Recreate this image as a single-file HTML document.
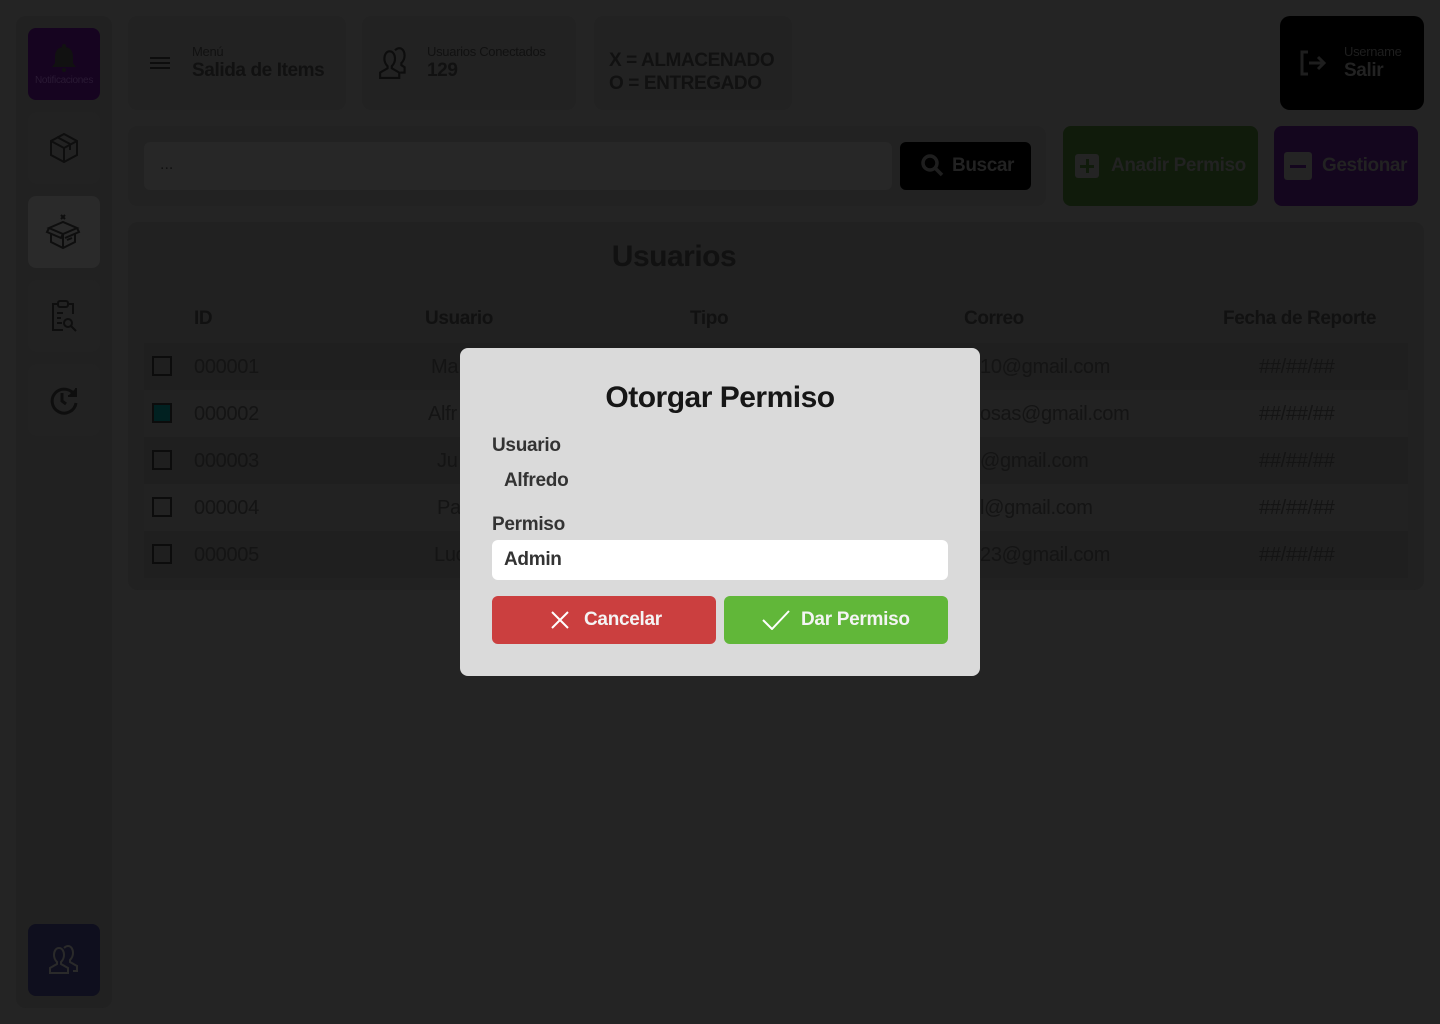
<!DOCTYPE html>
<html><head><meta charset="utf-8"><style>
*{box-sizing:border-box;margin:0;padding:0}
body{width:1440px;height:1024px;background:#242424;font-family:"Liberation Sans",sans-serif;position:relative;overflow:hidden;color:#111}
.a{position:absolute}
.side{left:16px;top:16px;width:96px;height:992px;background:#212121;border-radius:10px}
.sb{left:28px;width:72px;height:72px;border-radius:8px;background:#222;display:flex;align-items:center;justify-content:center}
.card{background:#222;border-radius:10px}
.lbl{font-size:13px;color:#111;font-weight:300;letter-spacing:-0.3px}
.big{font-size:19px;font-weight:bold;color:#111;letter-spacing:-0.4px}
.row{left:144px;width:1264px;height:47px}
.cell{position:absolute;top:13px;font-size:20px;font-weight:300;color:#141414;letter-spacing:-0.3px}
.cb{position:absolute;left:8px;top:13px;width:20px;height:20px;border:2px solid #0c0c0c}
.hd{position:absolute;top:308px;font-size:19px;font-weight:bold;color:#111;letter-spacing:-0.4px}
.mt{font-size:19px;font-weight:bold;color:#333;letter-spacing:-0.3px}
</style></head><body>
<div class="a side"></div>
<div class="a sb" style="top:28px;background:#160420;flex-direction:column">
<svg width="28" height="30" viewBox="0 0 28 30"><path d="M14 1a2 2 0 0 1 2 2v1c5 1 7 5 7 10v6l3 4H2l3-4v-6c0-5 2-9 7-10V3a2 2 0 0 1 2-2z" fill="#111"/><circle cx="14" cy="27" r="2" fill="#111"/></svg>
<span style="font-size:10px;color:#2a1a34;margin-top:2px;letter-spacing:-0.3px">Notificaciones</span></div>
<div class="a sb" style="top:112px"><svg width="30" height="32" viewBox="0 0 30 32" fill="none" stroke="#0e0e0e" stroke-width="2"><path d="M15 2L28 9v14L15 30 2 23V9z"/><path d="M2 9l13 7 13-7M15 16v14M8 5l13 7v6"/></svg></div>
<div class="a sb" style="top:196px;background:#2a2a2a"><svg width="38" height="36" viewBox="0 0 38 36" fill="none" stroke="#0e0e0e" stroke-width="2"><path d="M16 1l4 4M20 1l-4 4"/><path d="M4 14l14-6 14 6-14 6z"/><path d="M4 14l-2 4 14 6 2-4M32 14l2 4-14 6"/><path d="M6 19v9l12 6 12-6v-9M18 20v14M22 26l5-2"/></svg></div>
<div class="a sb" style="top:280px"><svg width="30" height="34" viewBox="0 0 30 34" fill="none" stroke="#0e0e0e" stroke-width="2"><path d="M9 5H4v26h10M19 5h5v10"/><rect x="9" y="2" width="10" height="6" rx="2"/><path d="M8 14h6M8 19h4M8 24h5"/><circle cx="19" cy="24" r="4"/><path d="M22 27l5 5"/></svg></div>
<div class="a sb" style="top:364px"><svg width="32" height="32" viewBox="0 0 32 32" fill="none" stroke="#0e0e0e" stroke-width="3"><path d="M27 12A12 12 0 1 0 28 19"/><path d="M14 9v8l4 3"/><path d="M28 4v8h-8" fill="#0e0e0e" stroke-width="2"/></svg></div>
<div class="a sb" style="top:924px;background:#0f0f1e"><svg width="32" height="32" viewBox="0 0 32 32" fill="none" stroke="#2a2a2a" stroke-width="2"><path d="M2 29v-5l7-4v-2c-2-2-3-4-3-7 0-4 2-7 5-7s5 3 5 7c0 3-1 5-3 7v2l7 4v5z"/><path d="M16 4c1-1 2-2 4-2 3 0 5 3 5 7 0 3-1 5-3 7v2l7 4v5h-4"/></svg></div>

<div class="a card" style="left:128px;top:16px;width:218px;height:94px"></div>
<div class="a" style="left:150px;top:57px"><div style="width:20px;height:2px;background:#0d0d0d;box-shadow:0 5px 0 #0d0d0d,0 10px 0 #0d0d0d"></div></div>
<div class="a lbl" style="left:192px;top:44px">Menú</div>
<div class="a big" style="left:192px;top:60px">Salida de Items</div>
<div class="a card" style="left:362px;top:16px;width:214px;height:94px"></div>
<svg class="a" style="left:378px;top:46px" width="34" height="34" viewBox="0 0 32 32" fill="none" stroke="#0d0d0d" stroke-width="2"><path d="M2 30v-5l7-4v-2c-2-2-3-4-3-7 0-4 2-7 5-7s5 3 5 7c0 3-1 5-3 7v2l7 4v5z"/><path d="M16 4c1-1 2-2 4-2 3 0 5 3 5 7 0 3-1 5-3 7v2l3 2v5h-4"/></svg>
<div class="a lbl" style="left:427px;top:44px">Usuarios Conectados</div>
<div class="a big" style="left:427px;top:60px">129</div>
<div class="a card" style="left:594px;top:16px;width:198px;height:94px"></div>
<div class="a big" style="left:609px;top:49px;line-height:23px">X = ALMACENADO<br>O = ENTREGADO</div>
<div class="a" style="left:1280px;top:16px;width:144px;height:94px;background:#000;border-radius:10px"></div>
<svg class="a" style="left:1298px;top:49px" width="28" height="28" viewBox="0 0 28 28" fill="none" stroke="#1e1e1e" stroke-width="3"><path d="M10 3H4v22h6M11 14h14M20 8l6 6-6 6"/></svg>
<div class="a lbl" style="left:1344px;top:44px;color:#1e1e1e">Username</div>
<div class="a big" style="left:1344px;top:60px;color:#222">Salir</div>

<div class="a card" style="left:128px;top:126px;width:918px;height:80px"></div>
<div class="a" style="left:144px;top:142px;width:748px;height:48px;background:#272727;border-radius:6px"></div>
<div class="a" style="left:160px;top:156px;font-size:16px;color:#111">...</div>
<div class="a" style="left:900px;top:142px;width:131px;height:48px;background:#000;border-radius:6px"></div>
<svg class="a" style="left:920px;top:153px" width="24" height="26" viewBox="0 0 24 26" fill="none" stroke="#1e1e1e" stroke-width="3.5"><circle cx="10" cy="10" r="7"/><path d="M15 15l7 7"/></svg>
<div class="a big" style="left:952px;top:155px;color:#222">Buscar</div>
<div class="a" style="left:1063px;top:126px;width:195px;height:80px;background:#101b0b;border-radius:8px"></div>
<div class="a" style="left:1075px;top:154px;width:24px;height:24px;background:#242424;border-radius:3px"></div>
<div class="a" style="left:1080px;top:165px;width:14px;height:3px;background:#101b0b"></div><div class="a" style="left:1086px;top:159px;width:3px;height:14px;background:#101b0b"></div>
<div class="a big" style="left:1111px;top:155px;color:#222">Anadir Permiso</div>
<div class="a" style="left:1274px;top:126px;width:144px;height:80px;background:#14061e;border-radius:8px"></div>
<div class="a" style="left:1284px;top:152px;width:28px;height:28px;background:#242424;border-radius:3px"></div>
<div class="a" style="left:1290px;top:165px;width:16px;height:3px;background:#14061e"></div>
<div class="a big" style="left:1322px;top:155px;color:#222">Gestionar</div>

<div class="a card" style="left:128px;top:222px;width:1296px;height:368px;background:#212121"></div>
<div class="a" style="left:0;width:1348px;top:240px;text-align:center;font-size:30px;font-weight:bold;color:#111;letter-spacing:-0.5px">Usuarios</div>
<div class="hd" style="left:194px">ID</div><div class="hd" style="left:425px">Usuario</div><div class="hd" style="left:690px">Tipo</div><div class="hd" style="left:964px">Correo</div><div class="hd" style="left:1223px">Fecha de Reporte</div>
<div class="a row" style="top:343px;background:#1f1f1f"><div class="cb"></div><div class="cell" style="left:50px">000001</div><div class="cell" style="left:287px">Ma</div><div class="cell" style="left:836px">10@gmail.com</div><div class="cell" style="left:1115px">##/##/##</div></div>
<div class="a row" style="top:390px;background:#222"><div class="cb" style="background:#012121"></div><div class="cell" style="left:50px">000002</div><div class="cell" style="left:284px">Alfr</div><div class="cell" style="left:836px">osas@gmail.com</div><div class="cell" style="left:1115px">##/##/##</div></div>
<div class="a row" style="top:437px;background:#1f1f1f"><div class="cb"></div><div class="cell" style="left:50px">000003</div><div class="cell" style="left:293px">Ju</div><div class="cell" style="left:836px">@gmail.com</div><div class="cell" style="left:1115px">##/##/##</div></div>
<div class="a row" style="top:484px;background:#222"><div class="cb"></div><div class="cell" style="left:50px">000004</div><div class="cell" style="left:293px">Pa</div><div class="cell" style="left:836px">l@gmail.com</div><div class="cell" style="left:1115px">##/##/##</div></div>
<div class="a row" style="top:531px;background:#1f1f1f"><div class="cb"></div><div class="cell" style="left:50px">000005</div><div class="cell" style="left:290px">Luc</div><div class="cell" style="left:836px">23@gmail.com</div><div class="cell" style="left:1115px">##/##/##</div></div>

<div class="a" style="left:460px;top:348px;width:520px;height:328px;background:#dadada;border-radius:8px">
<div class="a" style="left:0;width:520px;top:33px;text-align:center;font-size:30px;font-weight:bold;color:#161616;letter-spacing:-0.5px">Otorgar Permiso</div>
<div class="a mt" style="left:32px;top:87px">Usuario</div>
<div class="a mt" style="left:44px;top:122px">Alfredo</div>
<div class="a mt" style="left:32px;top:166px">Permiso</div>
<div class="a" style="left:32px;top:192px;width:456px;height:40px;background:#fff;border-radius:6px"></div>
<div class="a mt" style="left:44px;top:201px">Admin</div>
<div class="a" style="left:32px;top:248px;width:224px;height:48px;background:#cb3f3f;border-radius:6px"></div>
<svg class="a" style="left:91px;top:263px" width="18" height="18" viewBox="0 0 18 18" stroke="#fff" stroke-width="2"><path d="M1 1l16 16M17 1L1 17"/></svg>
<div class="a mt" style="left:124px;top:261px;color:#f4f4f4">Cancelar</div>
<div class="a" style="left:264px;top:248px;width:224px;height:48px;background:#61b739;border-radius:6px"></div>
<svg class="a" style="left:302px;top:262px" width="28" height="20" viewBox="0 0 28 20" fill="none" stroke="#fff" stroke-width="2"><path d="M1 10l9 9L27 1"/></svg>
<div class="a mt" style="left:341px;top:261px;color:#f4f4f4">Dar Permiso</div>
</div>
</body></html>
